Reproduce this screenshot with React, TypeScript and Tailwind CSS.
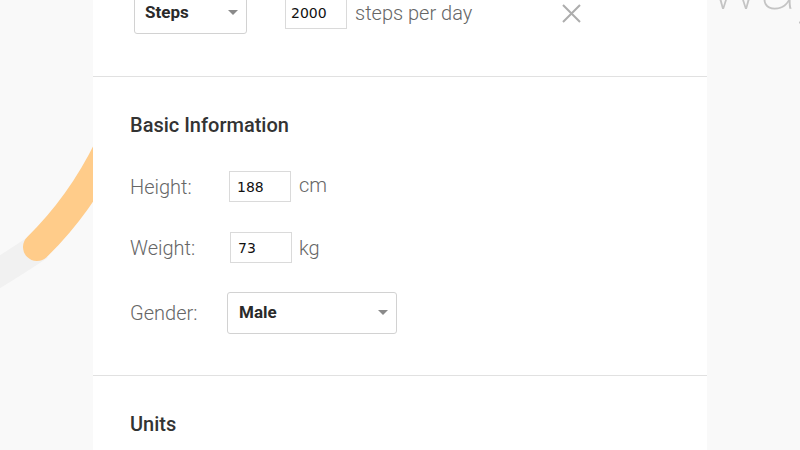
import React from "react";

const roboto = "font-['Roboto',_'Liberation_Sans',_sans-serif]";

function Caret() {
  return (
    <svg
      width="10"
      height="5"
      viewBox="0 0 10 5"
      className="absolute right-[8px] top-[17px]"
    >
      <polygon points="0,0 10,0 5,5" fill="#8a8a8a" />
    </svg>
  );
}

function Select({ value, className }: { value: string; className: string }) {
  return (
    <div
      className={`relative h-[42px] border border-[#d2d2d2] rounded-[3px] bg-white flex items-center text-[17px] font-bold text-[#2a2a2a] ${roboto} ${className}`}
    >
      {value}
      <Caret />
    </div>
  );
}

function NumberBox({ value, className }: { value: string; className?: string }) {
  return (
    <input
      type="text"
      readOnly
      defaultValue={value}
      className={`w-[62px] h-[31px] border border-[#dadada] bg-white text-[14px] text-[#111] font-['DejaVu_Sans',_sans-serif] outline-none ${className ?? ""}`}
    />
  );
}

function FieldRow({
  label,
  children,
}: {
  label: string;
  children: React.ReactNode;
}) {
  return (
    <div className="flex items-center">
      <span className={`w-[99px] text-[20px] font-light text-[#666] ${roboto}`}>
        {label}
      </span>
      {children}
    </div>
  );
}

export default function App() {
  return (
    <div className="relative w-[800px] h-[450px] overflow-hidden bg-[#f9f9f9]">
      {/* background decoration */}
      <svg
        className="absolute left-0 top-0"
        width="800"
        height="450"
        viewBox="0 0 800 450"
      >
        <path
          d="M -30 290 Q 10 266 40 246"
          stroke="#f1f1f1"
          strokeWidth="28"
          fill="none"
        />
        <path
          d="M 37 247 Q 80 205 108 148"
          stroke="#ffcc8a"
          strokeWidth="28"
          strokeLinecap="round"
          fill="none"
        />
      </svg>
      <div
        className={`absolute left-[709px] top-[-48px] text-[68px] leading-none font-thin text-[#c4c4c4] whitespace-nowrap ${roboto}`}
      >
        way
      </div>

      {/* settings panel */}
      <div className="relative ml-[93px] mt-[-8px] w-[614px] bg-white">
        <section className="pl-[41px] pb-[42px] border-b border-[#e1e1e1]">
          <div className="flex items-center">
            <Select value="Steps" className="w-[113px] pl-[10px]" />
            <NumberBox value="2000" className="ml-[38px] pl-[5px]" />
            <span className={`ml-[8px] text-[20px] font-light text-[#666] ${roboto}`}>
              steps per day
            </span>
            <svg
              width="19"
              height="19"
              viewBox="0 0 19 19"
              className="ml-[90px]"
            >
              <path d="M1 1 L18 18 M18 1 L1 18" stroke="#adadad" strokeWidth="2" />
            </svg>
          </div>
        </section>

        <section className="pl-[37px] pt-[36px] pb-[41px] border-b border-[#e1e1e1]">
          <h2 className={`text-[20px] leading-[24px] font-medium text-[#333] ${roboto}`}>
            Basic Information
          </h2>
          <div className="mt-[33px] flex flex-col gap-[29px]">
            <FieldRow label="Height:">
              <NumberBox value="188" className="pl-[7px]" />
              <span className={`ml-[8px] mb-[3px] text-[20px] font-light text-[#666] ${roboto}`}>
                cm
              </span>
            </FieldRow>
            <FieldRow label="Weight:">
              <NumberBox value="73" className="ml-px pl-[7px]" />
              <span className={`ml-[7px] text-[20px] font-light text-[#666] ${roboto}`}>
                kg
              </span>
            </FieldRow>
            <FieldRow label="Gender:">
              <Select value="Male" className="-ml-[2px] w-[170px] pl-[11px]" />
            </FieldRow>
          </div>
        </section>

        <section className="pl-[37px] pt-[36px] pb-[60px]">
          <h2 className={`text-[20px] leading-[24px] font-medium text-[#333] ${roboto}`}>
            Units
          </h2>
        </section>
      </div>
    </div>
  );
}
